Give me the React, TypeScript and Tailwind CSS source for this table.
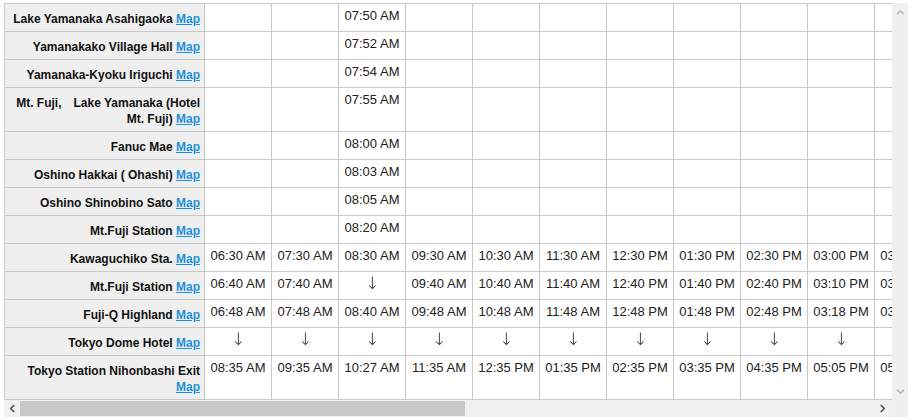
import React from "react";

type Stop = { name: string; times: string[] };

const COLS = 11;

const blank = (n: number) => Array.from({ length: n }, () => "");

// only the 3rd departure serves the Yamanaka side
const yamanaka = (t: string) => {
  const r = blank(COLS);
  r[2] = t;
  return r;
};

const stops: Stop[] = [
  { name: "Lake Yamanaka Asahigaoka", times: yamanaka("07:50 AM") },
  { name: "Yamanakako Village Hall", times: yamanaka("07:52 AM") },
  { name: "Yamanaka-Kyoku Iriguchi", times: yamanaka("07:54 AM") },
  { name: "Mt. Fuji,\u3000Lake Yamanaka (Hotel Mt. Fuji)", times: yamanaka("07:55 AM") },
  { name: "Fanuc Mae", times: yamanaka("08:00 AM") },
  { name: "Oshino Hakkai ( Ohashi)", times: yamanaka("08:03 AM") },
  { name: "Oshino Shinobino Sato", times: yamanaka("08:05 AM") },
  { name: "Mt.Fuji Station", times: yamanaka("08:20 AM") },
  {
    name: "Kawaguchiko Sta.",
    times: [
      "06:30 AM", "07:30 AM", "08:30 AM", "09:30 AM", "10:30 AM", "11:30 AM",
      "12:30 PM", "01:30 PM", "02:30 PM", "03:00 PM", "03:30 PM",
    ],
  },
  {
    name: "Mt.Fuji Station",
    times: [
      "06:40 AM", "07:40 AM", "↓", "09:40 AM", "10:40 AM", "11:40 AM",
      "12:40 PM", "01:40 PM", "02:40 PM", "03:10 PM", "03:40 PM",
    ],
  },
  {
    name: "Fuji-Q Highland",
    times: [
      "06:48 AM", "07:48 AM", "08:40 AM", "09:48 AM", "10:48 AM", "11:48 AM",
      "12:48 PM", "01:48 PM", "02:48 PM", "03:18 PM", "03:48 PM",
    ],
  },
  { name: "Tokyo Dome Hotel", times: Array.from({ length: COLS }, () => "↓") },
  {
    name: "Tokyo Station Nihonbashi Exit",
    times: [
      "08:35 AM", "09:35 AM", "10:27 AM", "11:35 AM", "12:35 PM", "01:35 PM",
      "02:35 PM", "03:35 PM", "04:35 PM", "05:05 PM", "05:35 PM",
    ],
  },
];

function Chevron({ dir, className }: { dir: "left" | "right" | "up" | "down"; className?: string }) {
  const pts = {
    left: "6,1 2,5 6,9",
    right: "2,1 6,5 2,9",
    up: "1,6 5,2 9,6",
    down: "1,3 5,7 9,3",
  }[dir];
  const box = dir === "left" || dir === "right" ? "0 0 8 10" : "0 0 10 8";
  return (
    <svg viewBox={box} className={className} fill="none" stroke="currentColor" strokeWidth={1.8}>
      <polyline points={pts} />
    </svg>
  );
}

export default function App() {
  return (
    <div className="w-[912px] h-[420px] overflow-hidden bg-white pl-1 pt-[3px] font-['Liberation_Sans','Noto_Sans_CJK_JP',sans-serif]">
      <div className="flex w-[904px]">
        <div className="flex w-[888px] flex-col">
          <div className="h-[397px] overflow-hidden">
            <div className="grid w-max grid-cols-[200px_repeat(11,67px)] border-l border-t border-[#c9c9c9]">
              {stops.map((s, i) => (
                <React.Fragment key={i}>
                  <div className="border-b border-r border-[#c9c9c9] bg-[#efefef] px-1 pb-1 pt-[7px] text-right text-[12px] font-bold leading-4 text-[#111]">
                    {s.name}{" "}
                    <a href="#" className="text-[#1e8fdb] underline">
                      Map
                    </a>
                  </div>
                  {s.times.map((t, j) => (
                    <div
                      key={j}
                      className="border-b border-r border-[#c9c9c9] pt-1 text-center text-[13px] leading-[15px] text-[#222]"
                    >
                      {t === "↓" ? (
                        <span className="inline-block transform-gpu font-['DejaVu_Sans',sans-serif] text-[17px] font-light text-[#222] antialiased">
                          ↓
                        </span>
                      ) : (
                        t
                      )}
                    </div>
                  ))}
                </React.Fragment>
              ))}
            </div>
          </div>

          {/* horizontal scrollbar */}
          <div className="flex h-[17px] bg-[#f1f1f1]">
            <div className="flex w-4 items-center justify-center text-[#505050]">
              <Chevron dir="left" className="h-[9px] w-[7px]" />
            </div>
            <div className="flex flex-1 py-px">
              <div className="w-[445px] bg-[#c8c8c8]" />
            </div>
            <div className="flex w-5 items-center justify-center text-[#505050]">
              <Chevron dir="right" className="h-[9px] w-[7px]" />
            </div>
          </div>
        </div>

        {/* vertical scrollbar + corner */}
        <div className="flex h-[414px] w-4 flex-col bg-[#f0f0f0]">
          <div className="flex h-[397px] flex-col items-center justify-between py-[6px] text-[#b4b4b4]">
            <Chevron dir="up" className="h-[7px] w-[9px]" />
            <Chevron dir="down" className="h-[7px] w-[9px]" />
          </div>
        </div>
      </div>
    </div>
  );
}
